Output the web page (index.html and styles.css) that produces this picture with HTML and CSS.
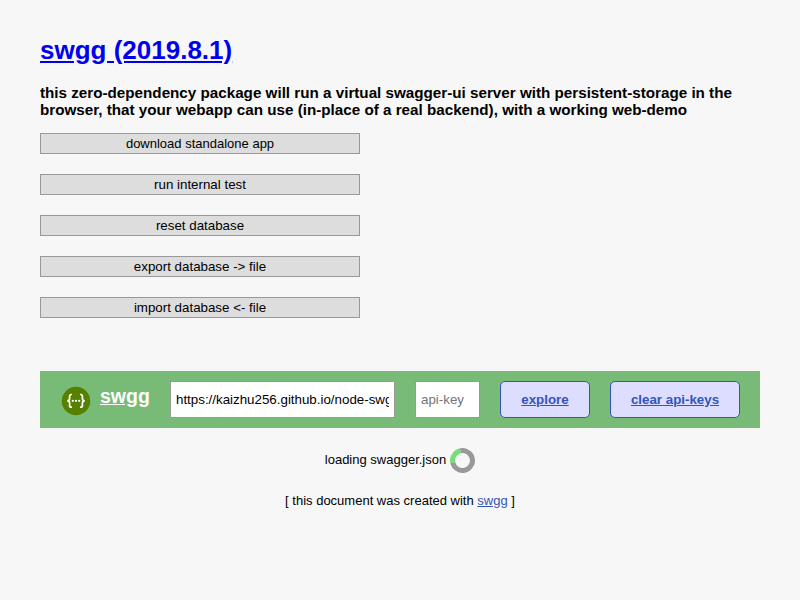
FILE: index.html
```html
<!DOCTYPE html>
<html lang="en">
<head>
<meta charset="utf-8">
<title>swgg (2019.8.1)</title>
<link rel="stylesheet" href="styles.css">
</head>
<body>
<h1><a href="#">swgg (2019.8.1)</a></h1>
<h3>this zero-dependency package will run a virtual swagger-ui server with persistent-storage in the browser, that your webapp can use (in-place of a real backend), with a working web-demo</h3>
<div class="actions">
<a class="download" href="#">download standalone app</a>
<button>run internal test</button>
<button>reset database</button>
<button>export database -&gt; file</button>
<button>import database &lt;- file</button>
</div>
<form class="bar">
<a class="brand" href="#">
<svg class="logo" viewBox="0 0 30 30"><circle cx="15" cy="15" r="14.2" fill="#558000"/><g fill="none" stroke="#fff" stroke-width="1.7"><path d="M10.9 8.5H10.2Q8.6 8.5 8.6 10.2V12.5Q8.6 14.8 6.2 14.8Q8.6 14.8 8.6 17.1V19.4Q8.6 21.1 10.2 21.1H10.9"/><path d="M19.1 8.5H19.8Q21.4 8.5 21.4 10.2V12.5Q21.4 14.8 23.8 14.8Q21.4 14.8 21.4 17.1V19.4Q21.4 21.1 19.8 21.1H19.1"/></g><g fill="#fff"><circle cx="11.8" cy="14.8" r="1.15"/><circle cx="15" cy="14.8" r="1.15"/><circle cx="18.2" cy="14.8" r="1.15"/></g></svg>
<span class="name">swgg</span></a>
<input class="url" type="text" value="https://kaizhu256.github.io/node-swgg/assets.swgg.json">
<input class="key" type="text" placeholder="api-key">
<a class="btn explore" href="#">explore</a>
<a class="btn clear" href="#">clear api-keys</a>
</form>
<div class="loading"><span class="message">loading swagger.json</span> <span class="spinner"></span></div>
<div class="footer">[ this document was created with <a href="#">swgg</a> ]</div>
</body>
</html>
```
FILE: styles.css
```css
* { box-sizing: border-box; }
body { margin: 0; padding: 35px 40px 0; background: #f7f7f7; color: #000; font: 13px/15px "Liberation Sans", Arial, sans-serif; }
h1 { margin: 0 0 19px; font-size: 26px; line-height: 30px; }
h1 a { color: #00e; }
h3 { margin: 0 0 15px; font-size: 15.21px; line-height: 17px; }
.actions { display: flex; flex-direction: column; gap: 20px; width: 320px; }
button, .download { height: 21px; padding: 0; border: 1px solid #999; background: #ddd; color: #000; font: 13.33px "Liberation Sans", Arial, sans-serif; }
.download { font-size: 13px; line-height: 19px; text-align: center; text-decoration: none; }
.bar { display: flex; align-items: center; height: 57px; margin-top: 53px; padding: 0 20px; background: #7b7; }
.brand { display: flex; width: 110px; color: #fff; font-size: 19.5px; font-weight: bold; line-height: 23px; }
.logo { width: 30px; height: 30px; margin: 3px 10px 0 1px; }
.name { margin-left: -1px; margin-top: 2px; }
input { height: 37px; padding: 0 5px; border: 1px solid #999; border-radius: 0; background: #fff; font: 13.33px "Liberation Sans", Arial, sans-serif; }
.url { width: 225px; margin-right: 20px; }
.key { width: 65px; margin-right: 20px; }
.btn { height: 37px; border: 1px solid #35b; border-radius: 5px; background: #ddf; color: #35b; font-size: 13.33px; font-weight: bold; line-height: 35px; text-align: center; }
.explore { width: 90px; margin-right: 20px; }
.clear { width: 130px; }
.loading { display: flex; justify-content: center; align-items: center; gap: 4px; height: 25px; margin-top: 20px; }
.message { margin-bottom: 2px; }
.spinner { width: 25px; height: 25px; border: 5px solid #999; border-left-color: #7d7; border-radius: 50%; transform: rotate(33deg); }
.footer { margin-top: 20px; text-align: center; }
.footer a { color: #35b; }
```
